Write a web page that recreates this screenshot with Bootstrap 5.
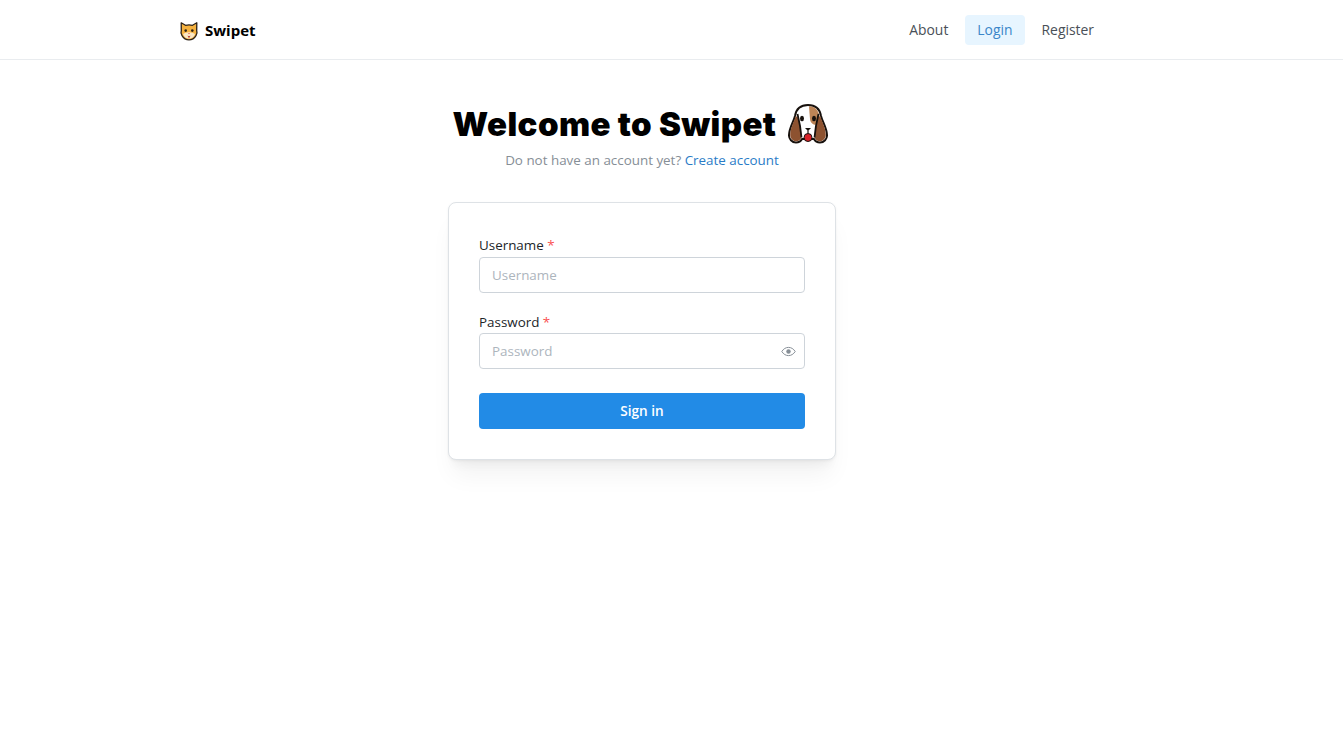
<!DOCTYPE html>
<html lang="en">
<head>
<meta charset="utf-8">
<title>Swipet</title>
<link href="https://cdn.jsdelivr.net/npm/bootstrap@5.3.0/dist/css/bootstrap.min.css" rel="stylesheet">
<style>
body{font-family:"Open Sans","Noto Sans",sans-serif;font-size:13.4px;color:#000;background:#fff}
.top-bar{height:60px;border-bottom:1px solid #e9ecef}
.bar-inner{width:960px;margin-left:163px;padding:0 17px 0 16px;height:59px}
.brand{font-size:15px;font-weight:700;color:#000;gap:6px;text-decoration:none;margin-top:2px}
.top-link{font-size:13.9px;font-weight:500;color:#495057;padding:0 12px;height:30px;line-height:30px;border-radius:4px;text-decoration:none}
.top-link.on{color:#3b86c9;background:#e7f5ff}
.nav-wrap{gap:5px}
.page-col{width:1284px;min-height:640px}
.hero-title{font-family:Inter,sans-serif;font-size:33px;font-weight:900;letter-spacing:.38px;line-height:1.3;margin:43px 0 0;padding-right:3px;color:#000;gap:12px}
.sub{font-size:13.4px;color:#868e96;margin-top:4px;line-height:20px}
.sub a{color:#2a7cc7;text-decoration:none}
.login-card{width:388px;margin:32px auto 0;padding:32px 30px 30px;border:1px solid #dee2e6;border-radius:8px;background:#fff;box-shadow:0 1px 3px rgba(0,0,0,.05),0 20px 25px -5px rgba(0,0,0,.05),0 10px 10px -5px rgba(0,0,0,.04)}
.fld-label{display:block;font-size:13.4px;font-weight:500;color:#212529;line-height:20px;margin:0 0 2px}
.fld-label span{color:#fa5252}
.gap-a .fld-label{margin-bottom:1px}
.login-card .form-control{height:36px;font-size:13.4px;padding:0 12px;border:1px solid #ced4da;border-radius:4px;box-shadow:none;font-family:inherit}
.login-card .form-control::placeholder{color:#adb5bd;opacity:1}
.pw-row{position:relative}
.eye{position:absolute;right:9px;top:11px;width:15px;height:15px}
.go-btn{display:block;width:100%;height:36px;padding:0;background:#228be6;border:0;border-radius:4px;color:#fff;font-weight:600;font-size:13.6px}
.go-btn:hover{background:#1c7ed6;color:#fff}
.gap-a{margin-top:19px}
.gap-b{margin-top:24px}
</style>
</head>
<body>
<header class="top-bar">
  <div class="bar-inner d-flex align-items-center justify-content-between">
    <a class="brand d-flex align-items-center" href="#">
      <svg width="20" height="20" viewBox="0 0 20 20" aria-hidden="true">
        <path d="M2.200 1.800 6.500 4.300Q10 3.500 13.500 4.300L17.800 1.800 17.700 9.500Q18.600 12 17 14.600 14.500 18.800 10 18.800 5.500 18.800 3 14.600 1.400 12 2.300 9.500Z" fill="#f4b13f" stroke="#2b2118" stroke-width="1.300" stroke-linejoin="round"/>
        <path d="M4 13q2-1.800 6-1.800t6 1.800q-1.500 4.600-6 4.600T4 13Z" fill="#fbe8c6"/>
        <circle cx="6.700" cy="9.600" r="1.300" fill="#2b2118"/><circle cx="13.300" cy="9.600" r="1.300" fill="#2b2118"/>
        <path d="M9 12h2l-1 1.200Z" fill="#d8503f"/>
        <path d="M8.700 14.500q1.300 1.600 2.600 0l-.4 1.900h-1.800Z" fill="#b8402f"/>
      </svg>
      <span>Swipet</span>
    </a>
    <nav class="nav-wrap d-flex align-items-center">
      <a class="top-link" href="#">About</a>
      <a class="top-link on" href="#">Login</a>
      <a class="top-link" href="#">Register</a>
    </nav>
  </div>
</header>
<main class="page-col">
  <h1 class="hero-title d-flex align-items-center justify-content-center">
    <span>Welcome to Swipet</span>
    <svg width="40" height="40" viewBox="0 0 40 40" aria-hidden="true">
      <path d="M20 1C12 1 8 6 7 12 5.500 18 1.200 24 1 31 .8 35 4 38.500 8 38.500c3 0 5-1.500 6-3.500h12c1 2 3 3.500 6 3.500 4 0 7.200-3.500 7-7.500C38.800 24 34.500 18 33 12 32 6 28 1 20 1Z" fill="#fff" stroke="#17110d" stroke-width="2" stroke-linejoin="round"/>
      <path d="M21 2.200C27 2.200 30.500 6 31.500 12.500L31 20C27 22 22.500 20 22 15Z" fill="#bc8456"/>
      <path d="M7.800 12C6 18 2.200 24 2.200 31c0 3.500 3 6.300 5.800 6.300 3 0 5-2 5.300-3.800C12.800 27 11.800 19 10 13.500Z" fill="#8d5230"/>
      <path d="M32.200 12C34 18 37.800 24 37.800 31c0 3.500-3 6.300-5.800 6.300-3 0-5-2-5.300-3.800C27.200 27 28.200 19 30 13.500Z" fill="#8d5230"/>
      <path d="M9.500 10C11.500 18 13 27 13.500 33.500M30.500 10C28.500 18 27 27 26.500 33.500" fill="none" stroke="#17110d" stroke-width="1.800"/>
      <ellipse cx="14" cy="14.500" rx="2" ry="2.700" fill="#17110d"/>
      <ellipse cx="26" cy="14.500" rx="2" ry="2.700" fill="#17110d"/>
      <path d="M17 24h6L20 27Z" fill="#17110d"/>
      <path d="M20 26.500v3" stroke="#17110d" stroke-width="1.200"/>
      <circle cx="20" cy="33.500" r="4" fill="#d8232a" stroke="#17110d" stroke-width="1"/>
    </svg>
  </h1>
  <p class="sub text-center mb-0">Do not have an account yet? <a href="#">Create account</a></p>
  <form class="login-card">
    <label class="fld-label" for="u">Username <span>*</span></label>
    <input id="u" class="form-control" type="text" placeholder="Username">
    <div class="gap-a">
      <label class="fld-label" for="p">Password <span>*</span></label>
      <div class="pw-row">
        <input id="p" class="form-control" type="password" placeholder="Password">
        <svg class="eye" viewBox="0 0 15 15" aria-hidden="true"><path d="M.8 7.500C2.500 4.800 4.800 3.400 7.500 3.400s5 1.400 6.700 4.100c-1.700 2.700-4 4.100-6.700 4.100S2.500 10.200.8 7.500Z" fill="none" stroke="#868e96" stroke-width="1"/><circle cx="7.500" cy="7.500" r="2.200" fill="#868e96"/></svg>
      </div>
    </div>
    <button type="button" class="go-btn gap-b">Sign in</button>
  </form>
</main>
<script src="https://cdn.jsdelivr.net/npm/bootstrap@5.3.0/dist/js/bootstrap.bundle.min.js"></script>
</body>
</html>
